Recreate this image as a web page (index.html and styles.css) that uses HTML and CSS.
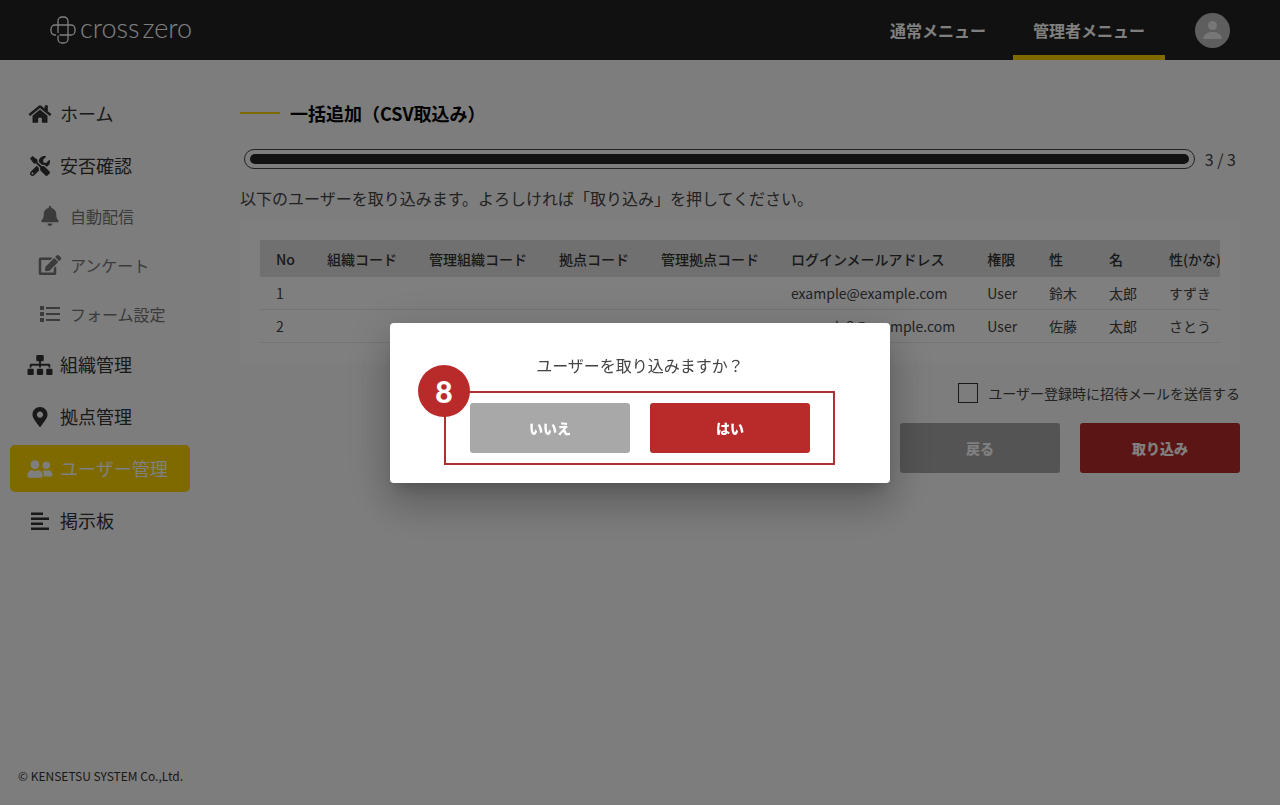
FILE: index.html
```html
<!DOCTYPE html>
<html lang="ja">
<head>
	<meta charset="utf-8">
	<meta name="viewport" content="width=device-width, initial-scale=1">
	<title>crosszero</title>
	<link rel="stylesheet" href="styles.css">
</head>
<body>
	<header class="header">
		<a class="logo" href="#">
			<svg width="26" height="28" viewBox="0 0 26 28" fill="none" stroke="currentColor" stroke-width="1.300">
				<path d="M8 19.500V23a4 4 0 0 0 4 4h2a4 4 0 0 0 4-4V5a4 4 0 0 0-4-4h-2a4 4 0 0 0-4 4v12"/>
				<path d="M6 19H5a4 4 0 0 1-4-4v-2a4 4 0 0 1 4-4h16a4 4 0 0 1 4 4v2a4 4 0 0 1-4 4H9.500"/>
			</svg>
			<span class="logo-text"><span>cross</span><span>zero</span></span>
		</a>
		<nav class="header-nav">
			<a href="#">通常メニュー</a>
			<a href="#" class="active">管理者メニュー</a>
		</nav>
		<button class="avatar" aria-label="アカウント">
			<svg width="35" height="35" viewBox="0 0 35 35">
				<circle cx="17.500" cy="12.500" r="4.500"/>
				<path d="M8.500 26v-1.500c0-3.500 5-5.500 9-5.500s9 2 9 5.500V26z"/>
			</svg>
		</button>
	</header>

	<div class="container">
		<aside class="sidebar">
			<nav class="menu">
				<a href="#">
					<svg viewBox="0 0 576 512"><path d="M280.37 148.26L96 300.11V464a16 16 0 0 0 16 16l112.06-.29a16 16 0 0 0 15.92-16V368a16 16 0 0 1 16-16h64a16 16 0 0 1 16 16v95.64a16 16 0 0 0 16 16.05L464 480a16 16 0 0 0 16-16V300L295.67 148.26a12.19 12.19 0 0 0-15.3 0zM571.6 251.47L488 182.56V44.05a12 12 0 0 0-12-12h-56a12 12 0 0 0-12 12v72.61L318.47 43a48 48 0 0 0-61 0L4.34 251.47a12 12 0 0 0-1.6 16.9l25.5 31A12 12 0 0 0 45.15 301l235.22-193.74a12.19 12.19 0 0 1 15.3 0L530.9 301a12 12 0 0 0 16.9-1.6l25.5-31a12 12 0 0 0-1.7-16.93z"/></svg>
					<span>ホーム</span>
				</a>
				<a href="#">
					<svg viewBox="0 0 512 512"><path d="M501.1 395.7L384 278.6c-23.1-23.1-57.6-27.6-85.4-13.9L192 158.1V96L64 0 0 64l96 128h62.1l106.6 106.6c-13.6 27.8-9.2 62.3 13.9 85.4l117.1 117.1c14.6 14.6 38.2 14.6 52.7 0l52.7-52.7c14.5-14.6 14.5-38.2 0-52.7zM331.7 225c28.3 0 54.9 11 74.9 31l19.4 19.4c15.8-6.9 30.8-16.5 43.8-29.5 37.1-37.1 49.7-89.3 37.9-136.7-2.2-9-13.5-12.1-20.1-5.500l-74.4 74.4-67.9-11.3L334 98.9l74.4-74.4c6.6-6.6 3.4-17.9-5.7-20.2-47.4-11.7-99.6.9-136.6 37.9-28.5 28.5-41.9 66.1-41.2 103.6l82.1 82.1c8.1-1.9 16.5-2.9 24.7-2.9zm-103.9 82l-56.7-56.7L18.7 402.8c-25 25-25 65.5 0 90.5s65.5 25 90.5 0l123.6-123.6c-7.6-19.9-9.9-41.6-5-62.7zM64 472c-13.2 0-24-10.8-24-24 0-13.3 10.7-24 24-24s24 10.7 24 24c0 13.2-10.7 24-24 24z"/></svg>
					<span>安否確認</span>
				</a>
				<a href="#" class="sub">
					<svg viewBox="0 0 448 512"><path d="M224 512c35.32 0 63.97-28.65 63.97-64H160.03c0 35.35 28.65 64 63.97 64zm215.39-149.71c-19.32-20.76-55.47-51.99-55.47-154.29 0-77.7-54.48-139.9-127.94-155.16V32c0-17.67-14.32-32-31.98-32s-31.98 14.33-31.98 32v20.84C118.56 68.1 64.08 130.3 64.08 208c0 102.3-36.15 133.53-55.47 154.29-6 6.45-8.66 14.16-8.61 21.71.11 16.4 12.98 32 32.1 32h383.8c19.12 0 32-15.6 32.1-32 .05-7.55-2.61-15.27-8.61-21.71z"/></svg>
					<span>自動配信</span>
				</a>
				<a href="#" class="sub">
					<svg viewBox="0 0 576 512"><path d="M402.6 83.2l90.2 90.2c3.8 3.8 3.8 10 0 13.8L274.4 405.6l-92.8 10.3c-12.4 1.4-22.9-9.1-21.5-21.5l10.3-92.8L388.8 83.2c3.8-3.8 10-3.8 13.8 0zm162-22.9l-48.8-48.8c-15.2-15.2-39.9-15.2-55.2 0l-35.4 35.4c-3.8 3.8-3.8 10 0 13.8l90.2 90.2c3.8 3.8 10 3.8 13.8 0l35.4-35.4c15.2-15.3 15.2-40 0-55.2zM384 346.2V448H64V128h229.8c3.2 0 6.2-1.3 8.5-3.5l40-40c7.6-7.6 2.2-20.5-8.5-20.5H48C21.500 64 0 85.5 0 112v352c0 26.5 21.5 48 48 48h352c26.5 0 48-21.5 48-48V306.2c0-10.7-12.9-16-20.5-8.5l-40 40c-2.2 2.3-3.5 5.3-3.5 8.5z"/></svg>
					<span>アンケート</span>
				</a>
				<a href="#" class="sub">
					<svg viewBox="0 0 20 20"><path d="M0 2h4v4H0zM0 8h4v4H0zM0 14h4v4H0zM6 3h14v2H6zM6 9h14v2H6zM6 15h14v2H6z"/></svg>
					<span>フォーム設定</span>
				</a>
				<a href="#">
					<svg viewBox="0 0 640 512"><path d="M104 272h192v48h48v-48h192v48h48v-57.600c0-21.2-17.200-38.400-38.400-38.400H344v-64h40a32 32 0 0 0 32-32V32a32 32 0 0 0-32-32H256a32 32 0 0 0-32 32v96a32 32 0 0 0 32 32h40v64H94.400C73.200 224 56 241.200 56 262.400V320h48z"/><rect y="352" width="160" height="160" rx="32"/><rect x="240" y="352" width="160" height="160" rx="32"/><rect x="480" y="352" width="160" height="160" rx="32"/></svg>
					<span>組織管理</span>
				</a>
				<a href="#">
					<svg viewBox="0 0 384 512"><path d="M172.268 501.67C26.97 291.031 0 269.413 0 192 0 85.961 85.961 0 192 0s192 85.961 192 192c0 77.413-26.97 99.031-172.268 309.67-9.535 13.774-29.93 13.773-39.464 0zM192 272c44.183 0 80-35.817 80-80s-35.817-80-80-80-80 35.817-80 80 35.817 80 80 80z"/></svg>
					<span>拠点管理</span>
				</a>
				<a href="#" class="active">
					<svg viewBox="0 0 640 512"><path d="M192 256c61.9 0 112-50.1 112-112S253.9 32 192 32 80 82.1 80 144s50.1 112 112 112zm76.8 32h-8.3c-20.8 10-43.9 16-68.5 16s-47.6-6-68.5-16h-8.300C51.6 288 0 339.6 0 403.2V432c0 26.5 21.5 48 48 48h288c26.5 0 48-21.5 48-48v-28.8c0-63.6-51.6-115.2-115.2-115.2zM480 256c53 0 96-43 96-96s-43-96-96-96-96 43-96 96 43 96 96 96zm48 32h-3.8c-13.9 4.8-28.6 8-44.2 8s-30.3-3.2-44.2-8H432c-20.4 0-39.2 5.9-55.7 15.4 24.4 26.3 39.7 61.2 39.7 99.8v38.4c0 2.2-.5 4.3-.6 6.4H592c26.5 0 48-21.5 48-48 0-61.9-50.1-112-112-112z"/></svg>
					<span>ユーザー管理</span>
				</a>
				<a href="#">
					<svg viewBox="0 0 18 20"><path d="M0 1.500h12V4H0zM0 6.500h18V9H0zM0 11.500h12V14H0zM0 16.500h18V19H0z"/></svg>
					<span>掲示板</span>
				</a>
			</nav>
			<small class="copyright">© KENSETSU SYSTEM Co.,Ltd.</small>
		</aside>

		<main class="main">
			<h1>一括追加（CSV取込み）</h1>
			<div class="step">
				<div class="bar" role="progressbar" aria-label="進捗" aria-valuemin="0" aria-valuemax="3" aria-valuenow="3">
					<div class="bar-fill" style="width:100%"></div>
				</div>
				<span>3 / 3</span>
			</div>
			<p class="lead">以下のユーザーを取り込みます。よろしければ「取り込み」を押してください。</p>

			<div class="card">
				<div class="table-wrap">
					<table>
						<thead>
							<tr>
								<th>No</th>
								<th>組織コード</th>
								<th>管理組織コード</th>
								<th>拠点コード</th>
								<th>管理拠点コード</th>
								<th>ログインメールアドレス</th>
								<th>権限</th>
								<th>性</th>
								<th>名</th>
								<th>性(かな)</th>
							</tr>
						</thead>
						<tbody>
							<tr>
								<td>1</td>
								<td></td>
								<td></td>
								<td></td>
								<td></td>
								<td>example@example.com</td>
								<td>User</td>
								<td>鈴木</td>
								<td>太郎</td>
								<td>すずき</td>
							</tr>
							<tr>
								<td>2</td>
								<td></td>
								<td></td>
								<td></td>
								<td></td>
								<td>example2@example.com</td>
								<td>User</td>
								<td>佐藤</td>
								<td>太郎</td>
								<td>さとう</td>
							</tr>
						</tbody>
					</table>
				</div>
			</div>

			<label class="check">
				<input type="checkbox">
				<span>ユーザー登録時に招待メールを送信する</span>
			</label>
			<div class="buttons end">
				<button class="btn gray">戻る</button>
				<button class="btn red">取り込み</button>
			</div>
		</main>
	</div>

	<div class="overlay">
		<div class="modal" role="dialog" aria-modal="true" aria-labelledby="modal-text">
			<p id="modal-text">ユーザーを取り込みますか？</p>
			<div class="buttons guide">
				<button class="btn gray">いいえ</button>
				<button class="btn red">はい</button>
				<span class="guide-no">8</span>
			</div>
		</div>
	</div>
</body>
</html>
```
FILE: styles.css
```css
* {
	box-sizing: border-box;
}
body {
	margin: 0;
	min-height: 100vh;
	display: flex;
	flex-direction: column;
	background: #fafafa;
	color: #444;
	font-family: "Noto Sans CJK JP", sans-serif;
	font-size: 16px;
	line-height: 24px;
}
a {
	color: inherit;
	text-decoration: none;
}
button {
	border: 0;
	padding: 0;
	font-family: inherit;
	cursor: pointer;
}

/* header */
.header {
	height: 60px;
	padding: 0 50px;
	display: flex;
	align-items: center;
	background: #222;
	color: #fff;
}
.logo {
	display: flex;
	align-items: center;
	gap: 4px;
	margin-right: auto;
	font-family: Lato, sans-serif;
	font-size: 27px;
	font-weight: 300;
	line-height: 28px;
}
.logo-text {
	display: flex;
	gap: 3px;
	padding-bottom: 4px;
}
.header-nav {
	align-self: stretch;
	display: flex;
	gap: 7px;
	margin-right: 30px;
	font-weight: 700;
}
.header-nav a {
	display: flex;
	align-items: center;
	padding: 5px 20px 0;
	border-bottom: 5px solid transparent;
}
.header-nav .active {
	border-color: #ffd400;
}
.avatar {
	width: 35px;
	height: 35px;
	border-radius: 50%;
	background: #bdbdbd;
	fill: #eee;
}

.container {
	flex: 1;
	display: flex;
}

/* sidebar */
.sidebar {
	width: 200px;
	flex: none;
	padding: 30px 10px 17px;
	display: flex;
	flex-direction: column;
	justify-content: space-between;
}
.menu {
	display: flex;
	flex-direction: column;
	gap: 5px;
}
.menu a {
	display: flex;
	align-items: center;
	height: 47px;
	padding-left: 10px;
	border-radius: 5px;
	color: #333;
	fill: #333;
	font-size: 18px;
}
.menu svg {
	width: 40px;
	height: 20px;
}
.menu span {
	padding-bottom: 2px;
}
.menu .sub {
	height: 44px;
	padding-left: 20px;
	color: #777;
	fill: #777;
	font-size: 16px;
}
.menu .sub span {
	padding-bottom: 0;
}
.menu .active {
	background: #ffd400;
	color: #fff;
	fill: #fff;
}
.copyright {
	padding-left: 8px;
	color: #333;
	font-size: 12px;
}

/* main */
.main {
	flex: 1;
	min-width: 0;
	padding: 40px;
}
h1 {
	display: flex;
	align-items: center;
	gap: 10px;
	margin: 0;
	color: #000;
	font-size: 18px;
	font-weight: 700;
	line-height: 26px;
}
h1::before {
	content: "";
	width: 40px;
	height: 2px;
	background: #ffd400;
}
.step {
	display: flex;
	align-items: center;
	gap: 10px;
	margin: 21px 4px 0;
}
.bar {
	flex: 1;
	height: 20px;
	padding: 4px 5px;
	border: 1px solid #444;
	border-radius: 10px;
}
.bar-fill {
	height: 10px;
	border-radius: 5px;
	background: #222;
}
.lead {
	margin: 15px 0 10px;
}
.card {
	padding: 20px;
	background: #fff;
}
.table-wrap {
	overflow: hidden;
}
table {
	min-width: 100%;
	border-collapse: separate;
	border-spacing: 0;
	font-size: 14px;
	white-space: nowrap;
}
th,
td {
	padding: 0 16px;
	text-align: left;
}
th {
	height: 37px;
	background: #e0e0e0;
	font-weight: 500;
	color: #333;
}
th:last-child {
	padding-right: 0;
}
td {
	height: 33px;
	border-bottom: 1px solid #e8e8e8;
}
.check {
	display: flex;
	align-items: center;
	justify-content: flex-end;
	gap: 10px;
	margin: 18px 0;
	font-size: 14px;
}
.check input {
	appearance: none;
	width: 20px;
	height: 20px;
	margin: 0;
	border: 1px solid #333;
}
.buttons {
	display: flex;
	gap: 20px;
}
.end {
	justify-content: flex-end;
}
.btn {
	width: 160px;
	height: 50px;
	border-radius: 3px;
	color: #fff;
	font-size: 14px;
	font-weight: 900;
}
.gray {
	background: #a8a8a8;
}
.red {
	background: #b92b2b;
}

/* modal */
.overlay {
	position: fixed;
	inset: 0;
	display: flex;
	align-items: center;
	justify-content: center;
	background: rgba(0, 0, 0, .5);
}
.modal {
	width: 500px;
	padding: 30px;
	display: flex;
	flex-direction: column;
	align-items: center;
	gap: 26px;
	border-radius: 4px;
	background: #fff;
	box-shadow: 0 11px 15px -7px rgba(0, 0, 0, .2), 0 24px 38px 3px rgba(0, 0, 0, .14), 0 9px 46px 8px rgba(0, 0, 0, .12);
}
.modal p {
	margin: 0;
}
.guide {
	position: relative;
}
.guide::before {
	content: "";
	position: absolute;
	inset: -12px -25px -12px -26px;
	border: 2px solid #b03030;
	pointer-events: none;
}
.guide-no {
	position: absolute;
	left: -52px;
	top: -38px;
	width: 52px;
	height: 52px;
	border-radius: 50%;
	background: #b92b2b;
	color: #fff;
	font-family: Lato, sans-serif;
	font-size: 30px;
	font-weight: 900;
	line-height: 52px;
	text-align: center;
}
```
